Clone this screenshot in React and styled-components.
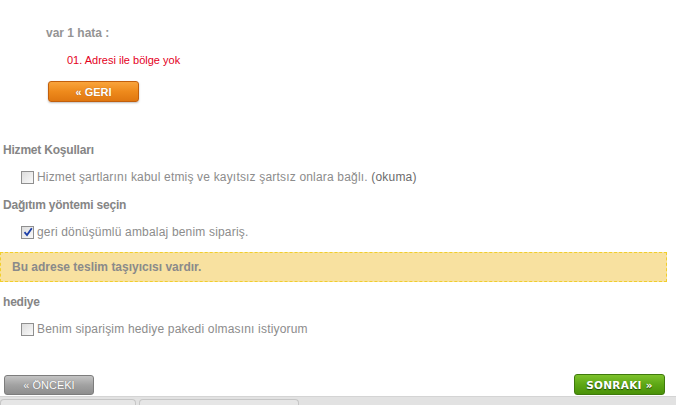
import React from "react";
import styled, { createGlobalStyle } from "styled-components";

const GlobalStyle = createGlobalStyle`
  html, body {
    margin: 0;
    padding: 0;
    background: #fff;
  }
  body {
    font-family: "Liberation Sans", Arial, sans-serif;
    font-size: 12px;
    color: #8a8a8a;
    overflow: hidden;
  }
`;

const Page = styled.div`
  width: 676px;
  height: 405px;
  display: flex;
  flex-direction: column;
`;

const ErrorBlock = styled.div`
  padding: 25px 0 0 46px;
  display: flex;
  flex-direction: column;
  align-items: flex-start;
`;

const ErrorTitle = styled.div`
  font-weight: bold;
  line-height: 16px;
  color: #949494;
`;

const ErrorList = styled.ol`
  list-style: none;
  margin: 11px 0 0;
  padding: 0 0 0 21px;
`;

const ErrorItem = styled.li`
  font-size: 11px;
  line-height: 16px;
  color: #e4001c;
`;

const ButtonBase = styled.button`
  height: 20px;
  padding: 0;
  border-radius: 3px;
  font-family: "Liberation Sans", Arial, sans-serif;
  font-size: 11px;
  font-weight: bold;
  color: #fff;
  cursor: pointer;
  display: flex;
  align-items: center;
  justify-content: center;
`;

const BackButton = styled(ButtonBase)`
  margin: 13px 0 0 2px;
  width: 91px;
  height: 21px;
  border: 1px solid #c25f0c;
  background: linear-gradient(#f9a43c, #ee8a1c 50%, #e07710);
  box-shadow: 0 1px 2px rgba(0, 0, 0, 0.25);
  text-shadow: 0 0 1px rgba(120, 50, 0, 0.6);
`;

const Form = styled.div`
  padding: 40px 0 0 3px;
  display: flex;
  flex-direction: column;
`;

const SectionTitle = styled.h3`
  margin: ${(p) => p.$top || 0}px 0 0;
  font-size: 12px;
  font-weight: bold;
  line-height: 16px;
  letter-spacing: -0.2px;
  color: #858585;
`;

const CheckRow = styled.label`
  margin: 11px 0 0 18px;
  display: flex;
  align-items: center;
  gap: 3px;
  line-height: 16px;
  letter-spacing: 0.18px;
  color: #8c8c8c;
`;

const Box = styled.span`
  width: 11px;
  height: 11px;
  border: 1px solid #8f8f8f;
  background: linear-gradient(135deg, #dcdcdc, #fafafa);
  display: flex;
  align-items: center;
  justify-content: center;
  flex: none;
`;

const Link = styled.span`
  color: #6b6b6b;
`;

const Notice = styled.div`
  margin: 12px 9px 0 -3px;
  height: 28px;
  border: 1px dashed #f1cf2b;
  background: #f8e1a0;
  display: flex;
  align-items: center;
  padding-left: 11px;
  font-weight: bold;
  color: #8a8a8a;
`;

const Footer = styled.div`
  margin-top: auto;
  padding: 0 11px 1px 4px;
  display: flex;
  justify-content: space-between;
  align-items: flex-end;
`;

const PrevButton = styled(ButtonBase)`
  width: 90px;
  border: 1px solid #7d7d7d;
  background: linear-gradient(#c4c4c4, #a2a2a2 50%, #8e8e8e);
  font-weight: normal;
  text-shadow: 0 0 1px rgba(60, 60, 60, 0.6);
`;

const NextButton = styled(ButtonBase)`
  width: 91px;
  height: 21px;
  border: 1px solid #3f7a0c;
  background: linear-gradient(#7dc22c, #5da715 50%, #4a9208);
  font-family: "DejaVu Sans", Verdana, sans-serif;
  font-size: 10.5px;
  letter-spacing: 0.3px;
  text-shadow: 0 1px 1px rgba(20, 60, 0, 0.9);
`;

const TabStrip = styled.div`
  height: 6px;
  background: #e2e2e2;
  border-top: 1px solid #d4d4d4;
  display: flex;
  gap: 3px;
  padding-top: 2px;
`;

const Tab = styled.div`
  width: ${(p) => p.$w}px;
  border: 1px solid #c6c6c6;
  border-bottom: none;
  border-radius: 4px 4px 0 0;
  background: #e6e6e6;
`;

function CheckBox({ checked }) {
  return (
    <Box>
      {checked && (
        <svg width="10" height="10" viewBox="0 0 10 10">
          <path d="M1.5 5.2 L4 8 L8.8 1.2" fill="none" stroke="#1d3fa8" strokeWidth="1.8" />
        </svg>
      )}
    </Box>
  );
}

export default function App() {
  return (
    <Page>
      <GlobalStyle />
      <ErrorBlock>
        <ErrorTitle>var 1 hata :</ErrorTitle>
        <ErrorList>
          <ErrorItem>01. Adresi ile bölge yok</ErrorItem>
        </ErrorList>
        <BackButton>« GERI</BackButton>
      </ErrorBlock>

      <Form>
        <SectionTitle>Hizmet Koşulları</SectionTitle>
        <CheckRow>
          <CheckBox />
          <span>
            Hizmet şartlarını kabul etmiş ve kayıtsız şartsız onlara bağlı. <Link>(okuma)</Link>
          </span>
        </CheckRow>

        <SectionTitle $top={12}>Dağıtım yöntemi seçin</SectionTitle>
        <CheckRow>
          <CheckBox checked />
          <span>geri dönüşümlü ambalaj benim sipariş.</span>
        </CheckRow>

        <Notice>Bu adrese teslim taşıyıcısı vardır.</Notice>

        <SectionTitle $top={12}>hediye</SectionTitle>
        <CheckRow>
          <CheckBox />
          <span>Benim siparişim hediye pakedi olmasını istiyorum</span>
        </CheckRow>
      </Form>

      <Footer>
        <PrevButton>« ÖNCEKI</PrevButton>
        <NextButton>SONRAKI »</NextButton>
      </Footer>
      <TabStrip>
        <Tab $w={134} />
        <Tab $w={158} />
      </TabStrip>
    </Page>
  );
}
